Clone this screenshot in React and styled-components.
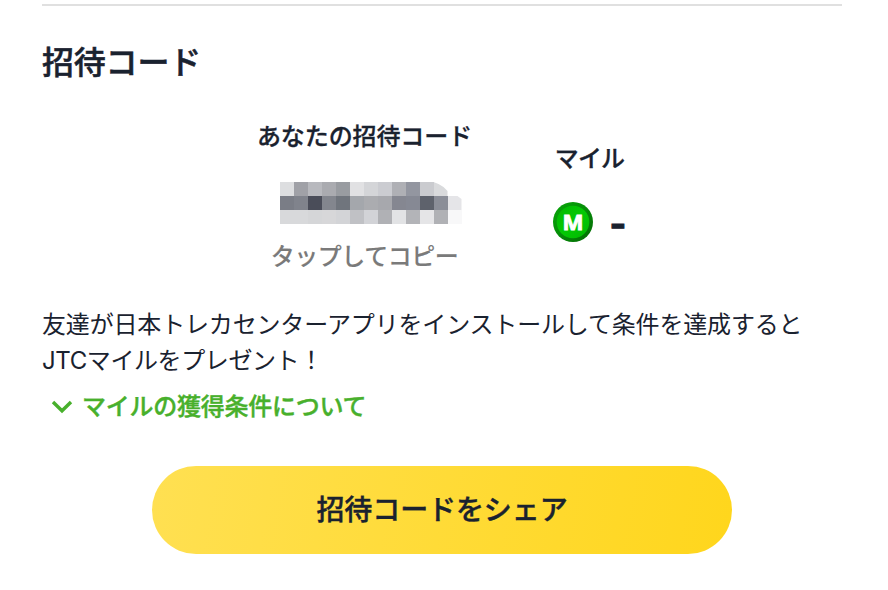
import React from 'react';
import styled, { createGlobalStyle } from 'styled-components';

const CODE_PIXELS = [
	['#dddee0', '#a0a1a7', '#b8b9be', '#aaabb0', '#999ca1', '#e1e1e3', '#d4d5d8', '#cbccd1', '#afb0b5', '#9396a0', '#cacbcf', '#d9dadc', null],
	['#7a7d86', '#80838c', '#4a4d59', '#83868e', '#70757d', '#a4a7ac', '#abacb0', '#a7a8ad', '#858791', '#868994', '#5e626c', '#8b8e98', '#e5e5e8'],
	['#d8d9db', '#d8d9db', '#d5d6d8', '#d7d7d9', '#d3d4d7', '#c0c1c5', '#d2d3d7', '#b0b1b5', '#e2e3e5', '#b3b4b8', '#e5e5e7', '#b0b1b5', '#f8f8f9'],
];

const CLIPS = {
	'0-11': 'polygon(0 0, 5px 2px, 10px 5px, 14px 9px, 14px 14px, 0 14px)',
	'1-12': 'polygon(0 0, 10px 0, 14px 3px, 14px 14px, 0 14px)',
};

const MileIcon = () => (
	<svg width="40" height="40" viewBox="0 0 40 40">
		<defs>
			<linearGradient id="rim" x1="0" y1="0" x2="1" y2="1">
				<stop offset="0" stopColor="#08a808" />
				<stop offset="0.5" stopColor="#058c08" />
				<stop offset="1" stopColor="#046804" />
			</linearGradient>
			<linearGradient id="face" x1="0" y1="0" x2="1" y2="1">
				<stop offset="0" stopColor="#02b802" />
				<stop offset="0.5" stopColor="#04c904" />
				<stop offset="1" stopColor="#02b802" />
			</linearGradient>
		</defs>
		<circle cx="20" cy="20" r="20" fill="url(#rim)" />
		<circle cx="20" cy="20" r="16.3" fill="url(#face)" />
		<MileLetter x="20" y="28.4" textLength="21" lengthAdjust="spacingAndGlyphs">
			M
		</MileLetter>
	</svg>
);

const App = () => {
	return (
		<Layout>
			<GlobalStyle />
			<Divider />
			<Title>招待コード</Title>
			<Summary>
				<CodeColumn>
					<Label>あなたの招待コード</Label>
					<HiddenCode>
						{CODE_PIXELS.map((row, y) =>
							row.map((color, x) => (
								<Pixel key={`${y}-${x}`} $color={color} $clip={CLIPS[`${y}-${x}`]} />
							))
						)}
					</HiddenCode>
					<Caption>タップしてコピー</Caption>
				</CodeColumn>
				<MileColumn>
					<Label $spacing="-0.8px">マイル</Label>
					<MileRow>
						<MileIcon />
						<MileValue>-</MileValue>
					</MileRow>
				</MileColumn>
			</Summary>
			<Description>
				<Line $spacing="-0.17px">友達が日本トレカセンターアプリをインストールして条件を達成すると</Line>
				<Line $spacing="-0.4px">JTCマイルをプレゼント！</Line>
			</Description>
			<Conditions>
				<svg width="22" height="14" viewBox="0 0 22 14" fill="none" stroke="#48b02c" strokeWidth="3.4">
					<path d="M2 2 L11 10.8 L20 2" />
				</svg>
				マイルの獲得条件について
			</Conditions>
			<ShareButton>招待コードをシェア</ShareButton>
		</Layout>
	);
};

export default App;

const GlobalStyle = createGlobalStyle`
	body {
		margin: 0;
		background: #fff;
		color: #1a222f;
		font-family: Inter, 'Noto Sans CJK JP', sans-serif;
	}
`;

const Layout = styled.div`
	box-sizing: border-box;
	width: 888px;
	height: 590px;
	padding: 4px 46px 0 42px;
	display: flex;
	flex-direction: column;
	overflow: hidden;
`;

const Divider = styled.div`
	height: 2px;
	flex-shrink: 0;
	background: #e0e0e0;
`;

const Title = styled.h2`
	margin: 33px 0 0;
	font-size: 32px;
	font-weight: 500;
	line-height: 48px;
	letter-spacing: -0.2px;
	-webkit-text-stroke: 0.5px;
`;

const Summary = styled.div`
	margin-top: 32px;
	display: flex;
	align-items: center;
	padding-left: 214px;
	gap: 80px;
`;

const CodeColumn = styled.div`
	display: flex;
	flex-direction: column;
	align-items: center;
	width: 217px;
`;

const MileColumn = styled.div`
	display: flex;
	flex-direction: column;
	align-items: center;
	width: 73px;
`;

const Label = styled.div`
	font-size: 24px;
	font-weight: 500;
	line-height: 36px;
	white-space: nowrap;
	letter-spacing: ${props => props.$spacing || '-0.1px'};
	-webkit-text-stroke: 0.3px;
`;

const HiddenCode = styled.div`
	display: grid;
	grid-template-columns: repeat(13, 14px);
	grid-auto-rows: 14px;
	margin: 27px 0 15px 12px;
`;

const Pixel = styled.span`
	background: ${props => props.$color || 'transparent'};
	clip-path: ${props => props.$clip || 'none'};
`;

const Caption = styled.div`
	font-size: 24px;
	font-weight: 500;
	line-height: 36px;
	letter-spacing: -0.5px;
	color: #7a7a7a;
	-webkit-text-stroke: 0.1px;
`;

const MileRow = styled.div`
	display: flex;
	align-items: center;
	gap: 17px;
	height: 40px;
	margin: 25px 0 11px;
`;

const MileLetter = styled.text`
	fill: #fff;
	stroke: #fff;
	stroke-width: 0.9px;
	font-family: 'Open Sans', sans-serif;
	font-size: 22px;
	font-weight: 700;
	text-anchor: middle;
`;

const MileValue = styled.span`
	font-size: 36px;
	font-weight: 700;
	line-height: 40px;
	padding-top: 3px;
	-webkit-text-stroke: 1px;
`;

const Description = styled.p`
	margin: 32px 0 0;
	font-size: 24px;
	line-height: 36px;
`;

const Line = styled.span`
	display: block;
	white-space: nowrap;
	letter-spacing: ${props => props.$spacing};
`;

const Conditions = styled.div`
	display: flex;
	align-items: center;
	gap: 9px;
	margin-top: 10px;
	padding-left: 9px;
	color: #48b02c;
	font-size: 24px;
	font-weight: 500;
	line-height: 36px;
	letter-spacing: -0.25px;
	-webkit-text-stroke: 0.4px;
`;

const ShareButton = styled.button`
	align-self: center;
	flex-shrink: 0;
	width: 580px;
	height: 88px;
	margin-top: 41px;
	padding: 0 0 4px;
	border: 0;
	border-radius: 44px;
	background: linear-gradient(100deg, #ffe052, #ffd61c);
	color: #1a222f;
	font-family: inherit;
	font-size: 28px;
	font-weight: 500;
	letter-spacing: -0.1px;
	-webkit-text-stroke: 0.4px;
`;
